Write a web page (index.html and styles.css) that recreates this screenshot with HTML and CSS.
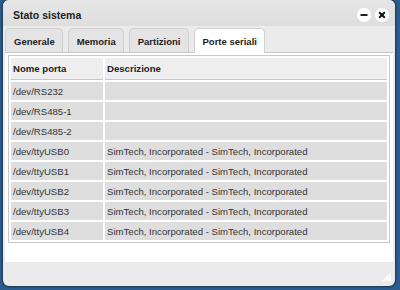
FILE: index.html
```html
<!DOCTYPE html>
<html lang="it">
<head>
  <meta charset="utf-8">
  <title>Stato sistema</title>
  <link rel="stylesheet" href="styles.css">
</head>
<body>
  <div class="window">
    <div class="titlebar">
      <span class="title">Stato sistema</span>
      <div class="win-buttons">
        <span class="win-btn">
          <svg width="14" height="14" viewBox="0 0 14 14"><path d="M3.5 7h7" stroke="#222" stroke-width="2"/></svg>
        </span>
        <span class="win-btn">
          <svg width="14" height="14" viewBox="0 0 14 14"><path d="M4.2 4.2l5.6 5.6M9.8 4.2l-5.6 5.6" stroke="#111" stroke-width="2"/></svg>
        </span>
      </div>
    </div>

    <ul class="tabs">
      <li class="tab">Generale</li>
      <li class="tab">Memoria</li>
      <li class="tab">Partizioni</li>
      <li class="tab active">Porte seriali</li>
    </ul>

    <div class="panel">
      <table class="ports">
        <thead>
          <tr>
            <th class="col-name">Nome porta</th>
            <th>Descrizione</th>
          </tr>
        </thead>
        <tbody>
          <tr><td>/dev/RS232</td><td></td></tr>
          <tr><td>/dev/RS485-1</td><td></td></tr>
          <tr><td>/dev/RS485-2</td><td></td></tr>
          <tr><td>/dev/ttyUSB0</td><td>SimTech, Incorporated - SimTech, Incorporated</td></tr>
          <tr><td>/dev/ttyUSB1</td><td>SimTech, Incorporated - SimTech, Incorporated</td></tr>
          <tr><td>/dev/ttyUSB2</td><td>SimTech, Incorporated - SimTech, Incorporated</td></tr>
          <tr><td>/dev/ttyUSB3</td><td>SimTech, Incorporated - SimTech, Incorporated</td></tr>
          <tr><td>/dev/ttyUSB4</td><td>SimTech, Incorporated - SimTech, Incorporated</td></tr>
        </tbody>
      </table>
    </div>

    <div class="footer">
      <span class="grip"></span>
    </div>
  </div>
</body>
</html>
```

FILE: styles.css
```css
* {
  box-sizing: border-box;
}

body {
  margin: 0;
  padding: 0;
  background-color: #2c5d8d;
  font-family: 'Liberation Sans', Arial, sans-serif;
  color: #333;
  height: 290px;
  overflow: hidden;
}

.window {
  margin-left: 3px;
  width: 392px;
  height: 286px;
  background-color: #ebebeb;
  border-radius: 6px;
  box-shadow: 0 0 2px 1px rgba(0, 0, 0, 0.45);
  display: flex;
  flex-direction: column;
  overflow: hidden;
}

.titlebar {
  height: 26px;
  flex: none;
  display: flex;
  align-items: center;
  justify-content: space-between;
  padding: 0 6px 0 10px;
  background: linear-gradient(#e6e6e6, #dedede);
}

.title {
  font-size: 10.5px;
  font-weight: bold;
  color: #222;
  padding-top: 3px;
}

.win-buttons {
  display: flex;
  gap: 4px;
  padding-top: 3px;
}

.win-btn {
  width: 14px;
  height: 14px;
  border-radius: 50%;
  background-color: #fff;
  display: flex;
}

.tabs {
  list-style: none;
  margin: 2px 0 0 0;
  padding: 0 2px;
  display: flex;
  gap: 5px;
  height: 24px;
  flex: none;
}

.tab {
  font-size: 9.5px;
  font-weight: bold;
  color: #222;
  padding: 2px 7px 0 8px;
  line-height: 22px;
  background-color: #e4e4e4;
  border: 1px solid #d0d0d0;
  border-bottom: none;
  border-radius: 5px 5px 0 0;
}

.tab.active {
  background-color: #fff;
  height: 25px;
  position: relative;
  z-index: 1;
}

.panel {
  flex: 1;
  margin: 0 2px;
  background-color: #fff;
  border-top: 1px solid #c8c8c8;
  padding: 2px 3px;
}

.ports {
  width: 100%;
  border: 1px solid #c9c9c9;
  border-spacing: 2px;
  font-size: 9.6px;
}

.ports th {
  text-align: left;
  font-weight: bold;
  color: #222;
  background-color: #eeeeee;
  height: 22px;
  padding: 0 2px;
  border-bottom: 1px solid #c6c6c6;
}

.ports th.col-name {
  width: 92px;
}

.ports td {
  background-color: #dedede;
  height: 18px;
  padding: 0 2px;
  color: #333;
}

.footer {
  height: 24px;
  flex: none;
  display: flex;
  justify-content: flex-end;
  align-items: flex-end;
  padding: 0 4px 5px 0;
}

.grip {
  width: 0;
  height: 0;
  border-left: 9px solid transparent;
  border-bottom: 9px solid #fafafa;
}
```
